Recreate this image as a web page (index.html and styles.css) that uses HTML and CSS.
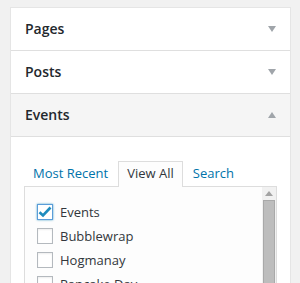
FILE: index.html
```html
<!DOCTYPE html>
<html lang="en">
<head>
    <meta charset="UTF-8">
    <meta name="viewport" content="width=device-width, initial-scale=1.0">
    <title>Menu Items</title>
    <link rel="stylesheet" href="styles.css">
</head>
<body>

<div class="accordion">
    <div class="section">
        <h3 class="section-title">Pages
            <svg class="arrow" width="8" height="6" viewBox="0 0 8 6"><polygon points="0,0 8,0 4,6" fill="#a0a5aa"/></svg>
        </h3>
    </div>
    <div class="section">
        <h3 class="section-title">Posts
            <svg class="arrow" width="8" height="6" viewBox="0 0 8 6"><polygon points="0,0 8,0 4,6" fill="#a0a5aa"/></svg>
        </h3>
    </div>
    <div class="section open">
        <h3 class="section-title">Events
            <svg class="arrow" width="8" height="6" viewBox="0 0 8 6"><polygon points="0,6 8,6 4,0" fill="#a0a5aa"/></svg>
        </h3>
        <div class="section-content">
            <ul class="tabs">
                <li class="tab"><a href="#">Most Recent</a></li>
                <li class="tab active"><a href="#">View All</a></li>
                <li class="tab"><a href="#">Search</a></li>
            </ul>
            <div class="tabs-panel">
                <ul class="checklist">
                    <li><span class="checkbox checked"><svg width="14" height="14" viewBox="0 0 14 14"><path d="M1.5 7.2 L5 10.5 L12.5 2.5" fill="none" stroke="#1e8cbe" stroke-width="2.6"/></svg></span>Events</li>
                    <li><span class="checkbox"></span>Bubblewrap</li>
                    <li><span class="checkbox"></span>Hogmanay</li>
                    <li><span class="checkbox"></span>Pancake Day</li>
                    <li><span class="checkbox"></span>Summer Fair</li>
                </ul>
                <div class="scrollbar">
                    <div class="scroll-up"><svg width="8" height="5" viewBox="0 0 8 5"><polygon points="0,5 8,5 4,0" fill="#a3a3a3"/></svg></div>
                    <div class="scroll-thumb"></div>
                </div>
            </div>
        </div>
    </div>
</div>

</body>
</html>
```

FILE: styles.css
```css
body{
    font-family:"Open Sans", sans-serif;
    background-color:#f1f1f1;
    margin:0;
    padding:7px 0 0 10px;
    color:#32373c;
    font-size:13px;
}
.accordion{
    width:281px;
    box-sizing:border-box;
    background-color:white;
    border:1px solid #e5e5e5;
    border-bottom:none;
}
.section{
    border-bottom:1px solid #dfdfdf;
}
.section-title{
    display:flex;
    justify-content:space-between;
    align-items:center;
    margin:0;
    padding:10px 14px 11px 14px;
    line-height:21px;
    font-size:14px;
    font-weight:600;
    color:#23282d;
}
.open .section-title{
    background-color:#f5f5f5;
    border-bottom:1px solid #dfdfdf;
}
.arrow{
    display:block;
}
.section-content{
    padding:24px 13px 0 13px;
}
.tabs{
    display:flex;
    gap:1px;
    margin:0;
    padding:0;
    list-style:none;
}
.tab{
    padding:2px 8px 4px;
    line-height:19px;
    border:1px solid transparent;
    border-bottom:none;
    margin-bottom:-1px;
}
.tab a{
    color:#0073aa;
    text-decoration:none;
}
.tab.active{
    border-color:#dddddd;
    background-color:#fdfdfd;
    position:relative;
}
.tab.active a{
    color:#32373c;
}
.tabs-panel{
    display:flex;
    height:200px;
    border:1px solid #dddddd;
    background-color:#fdfdfd;
}
.checklist{
    flex:1;
    margin:0;
    padding:13px 0 0 12px;
    list-style:none;
}
.checklist li{
    display:flex;
    align-items:center;
    gap:7px;
    height:24px;
    line-height:24px;
}
.checkbox{
    display:flex;
    align-items:center;
    justify-content:center;
    width:16px;
    height:16px;
    box-sizing:border-box;
    border:1px solid #b4b9be;
    background-color:#fff;
    box-shadow:inset 0 1px 2px rgba(0, 0, 0, 0.07);
}
.checkbox.checked{
    border-color:#5b9dd9;
    box-shadow:0 0 2px rgba(30, 140, 190, 0.8);
}
.scrollbar{
    width:14px;
    background-color:#f1f1f1;
    display:flex;
    flex-direction:column;
}
.scroll-up{
    height:13px;
    display:flex;
    align-items:center;
    justify-content:center;
}
.scroll-thumb{
    flex:1;
    margin:0 1px;
    background-color:#bdbdbd;
    border:1px solid #a9a9a9;
}
```
